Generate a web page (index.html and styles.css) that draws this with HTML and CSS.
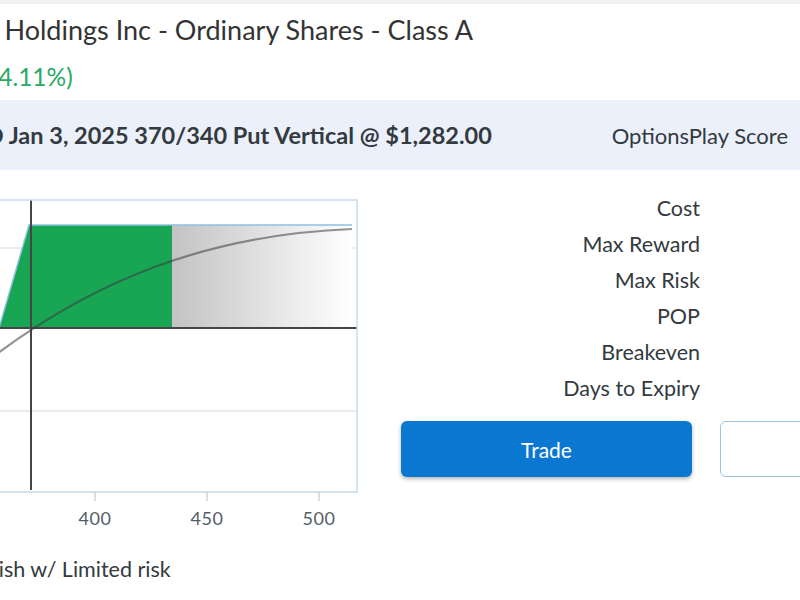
FILE: index.html
```html
<!DOCTYPE html>
<html lang="en">
<head>
  <meta charset="UTF-8">
  <title>CRWD Put Vertical</title>
  <link rel="stylesheet" href="styles.css">
</head>
<body>
  <div class="topbar"></div>

  <header class="stock">
    <h1 class="stock-name">CrowdStrike Holdings Inc - Ordinary Shares - Class A</h1>
    <div class="stock-quote">$365.71 +14.44 (+4.11%)</div>
  </header>

  <section class="strategy">
    <div class="strategy-name">Sell CRWD Jan 3, 2025 370/340 Put Vertical @ $1,282.00</div>
    <div class="strategy-score">OptionsPlay Score</div>
  </section>

  <section class="main">
    <div class="chart-col">
      <svg class="chart" width="401" height="340" viewBox="0 0 401 340">
        <defs>
          <linearGradient id="fade" x1="0" y1="0" x2="1" y2="0">
            <stop offset="0" stop-color="#c3c3c3"/>
            <stop offset="1" stop-color="#ffffff"/>
          </linearGradient>
        </defs>
        <!-- grid -->
        <line x1="-20" y1="53" x2="357" y2="53" stroke="#e2e4e6" stroke-width="1.5"/>
        <line x1="-20" y1="216" x2="357" y2="216" stroke="#e2e4e6" stroke-width="1.5"/>
        <!-- profit area -->
        <rect x="172" y="30" width="180" height="103" fill="url(#fade)"/>
        <polygon points="-1,133 29,30 172,30 172,133" fill="#18a655"/>
        <polyline points="-1,133 29,30 352,30" fill="none" stroke="#8ec0e4" stroke-width="1.5"/>
        <!-- axes -->
        <line x1="-20" y1="133" x2="357" y2="133" stroke="#454545" stroke-width="2"/>
        <line x1="31" y1="5" x2="31" y2="295" stroke="#454545" stroke-width="2"/>
        <!-- today curve -->
        <path d="M -2 158 C 90 90, 200 40, 352 34" fill="none" stroke="rgba(60,60,60,0.55)" stroke-width="2.2"/>
        <!-- frame -->
        <rect x="-20" y="5" width="377" height="292" fill="none" stroke="#c9d9ea" stroke-width="1.5"/>
        <!-- x axis -->
        <line x1="95" y1="297" x2="95" y2="306" stroke="#ccd6e0" stroke-width="1.5"/>
        <line x1="207" y1="297" x2="207" y2="306" stroke="#ccd6e0" stroke-width="1.5"/>
        <line x1="319" y1="297" x2="319" y2="306" stroke="#ccd6e0" stroke-width="1.5"/>
        <text class="tick" x="95" y="330">400</text>
        <text class="tick" x="207" y="330">450</text>
        <text class="tick" x="319" y="330">500</text>
      </svg>
      <div class="sentiment">Bullish w/ Limited risk</div>
    </div>

    <div class="details">
      <dl class="stats">
        <dt>Cost</dt><dd></dd>
        <dt>Max Reward</dt><dd></dd>
        <dt>Max Risk</dt><dd></dd>
        <dt>POP</dt><dd></dd>
        <dt>Breakeven</dt><dd></dd>
        <dt>Days to Expiry</dt><dd></dd>
      </dl>
      <div class="actions">
        <button type="button" class="btn btn-trade">Trade</button>
        <button type="button" class="btn btn-outline"></button>
      </div>
    </div>
  </section>
</body>
</html>
```

FILE: styles.css
```css
body {
  font-family: 'Lato', 'Liberation Sans', sans-serif;
  margin: 0;
  padding: 0;
  width: 800px;
  height: 600px;
  overflow: hidden;
  background-color: #ffffff;
  color: #333a40;
}

.topbar {
  height: 4px;
  background-color: #f2f2f2;
}

.stock {
  padding-top: 11px;
  height: 85px;
  white-space: nowrap;
}

.stock-name {
  margin: 0;
  font-size: 27px;
  font-weight: 400;
  line-height: 30px;
  text-indent: -148px;
  color: #333;
}

.stock-quote {
  margin-top: 17px;
  font-size: 24.5px;
  line-height: 30px;
  text-indent: -203px;
  color: #2aa865;
}

.strategy {
  display: flex;
  align-items: center;
  justify-content: space-between;
  height: 70px;
  padding-right: 12px;
  background-color: #ebf0fa;
  font-size: 22px;
  white-space: nowrap;
}

.strategy-name {
  font-size: 23.5px;
  font-weight: 700;
  text-indent: -112px;
}

.main {
  display: grid;
  grid-template-columns: 401px 1fr;
}

.chart {
  display: block;
  margin-top: 25px;
  overflow: hidden;
}

.tick {
  font-family: 'Lato', sans-serif;
  font-size: 18px;
  letter-spacing: 0.5px;
  fill: #535c66;
  text-anchor: middle;
}

.sentiment {
  margin-top: 22px;
  font-size: 21.5px;
  line-height: 24px;
  text-indent: -37px;
  white-space: nowrap;
}

.details {
  padding-top: 20px;
}

.stats {
  display: grid;
  grid-template-columns: 299px 1fr;
  margin: 0;
  font-size: 21.5px;
  line-height: 36px;
}

.stats dt {
  text-align: right;
}

.stats dd {
  margin: 0;
}

.actions {
  display: flex;
  gap: 28px;
  margin-top: 15px;
}

.btn {
  flex: 0 0 291px;
  height: 56px;
  border-radius: 6px;
  font-family: 'Lato', sans-serif;
  font-size: 21px;
}

.btn-trade {
  border: none;
  background-color: #0a78d1;
  color: #ffffff;
  box-shadow: 0 2px 4px rgba(0, 0, 0, 0.3);
}

.btn-outline {
  border: 1.5px solid #9cc2e2;
  background-color: #ffffff;
}
```
